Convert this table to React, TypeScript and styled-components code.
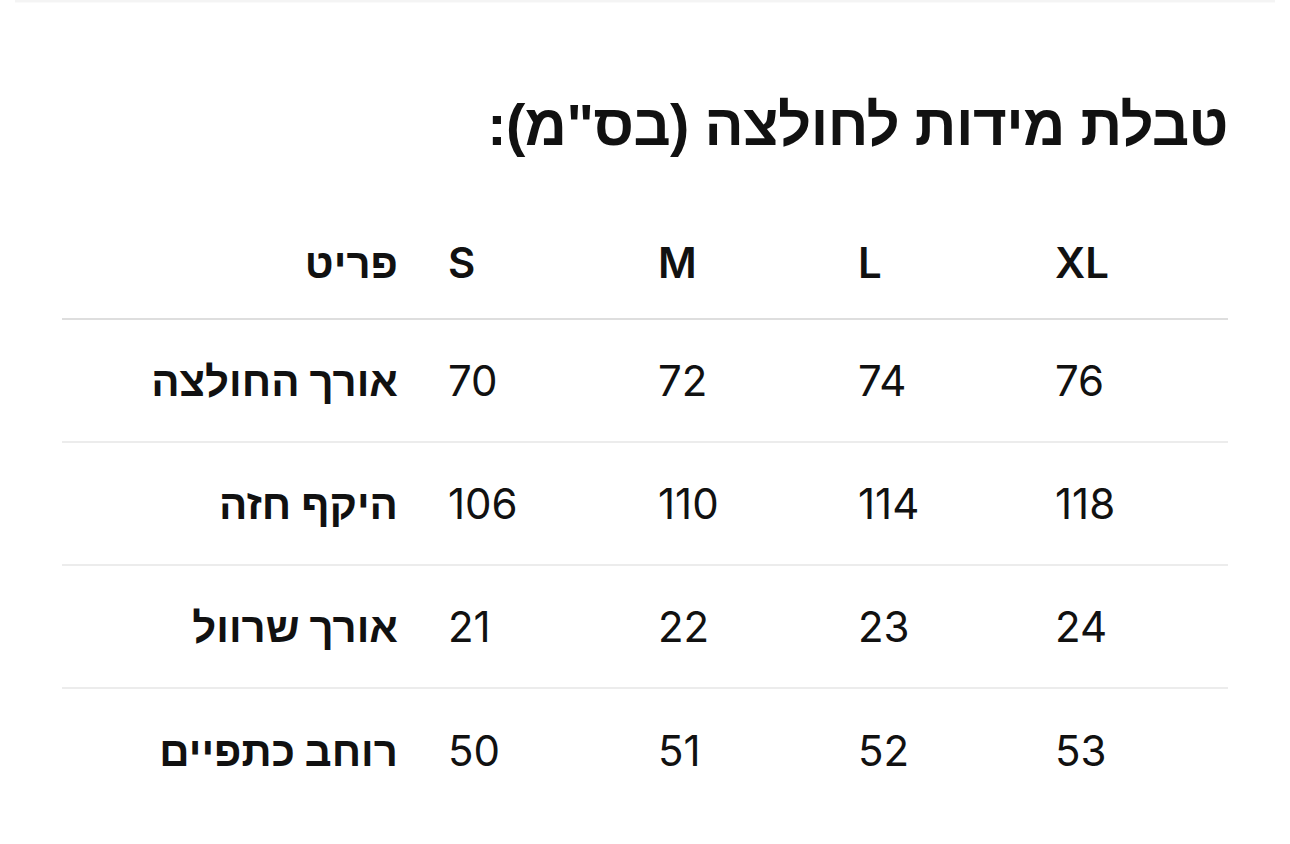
import React from "react";
import styled, { createGlobalStyle } from "styled-components";

const GlobalStyle = createGlobalStyle`
  html, body {
    margin: 0;
    padding: 0;
    background: #fff;
  }
  body {
    font-family: Inter, "Liberation Sans", sans-serif;
    color: #111;
  }
`;

const sizes = ["S", "M", "L", "XL"];

const rows = [
  { label: "אורך החולצה", values: [70, 72, 74, 76] },
  { label: "היקף חזה", values: [106, 110, 114, 118] },
  { label: "אורך שרוול", values: [21, 22, 23, 24] },
  { label: "רוחב כתפיים", values: [50, 51, 52, 53] },
];

function App() {
  return (
    <>
      <GlobalStyle />
      <TopEdge />
      <Page>
        <Title dir="rtl">טבלת מידות לחולצה (בס"מ):</Title>
        <Table>
          <Row $head>
            <LabelCell $head dir="rtl">פריט</LabelCell>
            {sizes.map((s) => (
              <ValueCell key={s} $head>
                {s}
              </ValueCell>
            ))}
          </Row>
          {rows.map((r) => (
            <Row key={r.label}>
              <LabelCell dir="rtl">{r.label}</LabelCell>
              {r.values.map((v, i) => (
                <ValueCell key={i}>{v}</ValueCell>
              ))}
            </Row>
          ))}
        </Table>
      </Page>
    </>
  );
}

export default App;

const TopEdge = styled.div`
  margin: 0 15px;
  height: 2px;
  background: #f4f4f4;
  border-bottom: 1px solid #fafafa;
`;

const Page = styled.main`
  padding: 0 62px;
  display: flex;
  flex-flow: column nowrap;
`;

const Title = styled.h1`
  margin: 82px 0 0 0;
  text-align: right;
  font-family: "Liberation Sans", sans-serif;
  font-weight: 700;
  font-size: 58px;
  line-height: 80px;
  letter-spacing: -0.5px;
  color: #111;
`;

const Table = styled.div`
  margin-top: 32px;
  display: flex;
  flex-flow: column nowrap;
`;

const Row = styled.div<{ $head?: boolean }>`
  display: grid;
  grid-template-columns: 386px 210px 200px 197px 1fr;
  align-items: center;
  height: 123px;
  padding-top: ${(p) => (p.$head ? "10px" : "0")};
  box-sizing: border-box;
  border-bottom: ${(p) => (p.$head ? "2px solid #dedede" : "2px solid #ececec")};
  &:last-child {
    border-bottom: none;
  }
`;

const LabelCell = styled.div<{ $head?: boolean }>`
  padding-right: 50px;
  text-align: right;
  font-family: Inter, "Liberation Sans", sans-serif;
  font-weight: ${(p) => (p.$head ? 600 : 700)};
  font-size: 42px;
  color: #111;
`;

const ValueCell = styled.div<{ $head?: boolean }>`
  text-align: left;
  font-family: Inter, "Liberation Sans", sans-serif;
  font-weight: ${(p) => (p.$head ? 600 : 400)};
  font-size: 42px;
  color: #111;
`;
